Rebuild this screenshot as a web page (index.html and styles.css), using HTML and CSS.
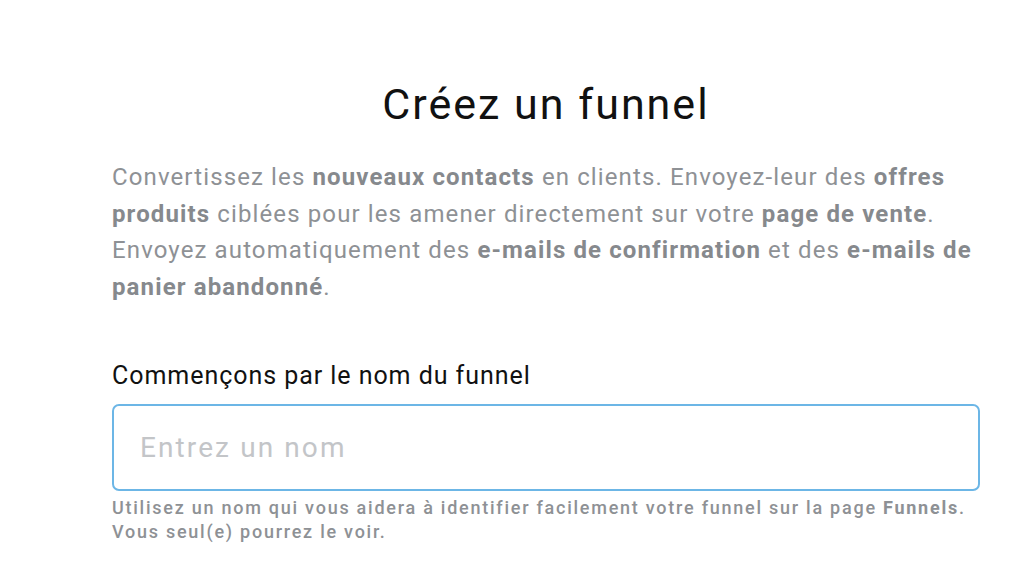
FILE: index.html
```html
<!DOCTYPE html>
<html lang="fr">
<head>
<meta charset="utf-8">
<link rel="stylesheet" href="styles.css">
</head>
<body>
<main class="page">
  <h1 class="title">Créez un funnel</h1>
  <p class="intro">Convertissez les <b>nouveaux contacts</b> en clients. Envoyez-leur des <b>offres produits</b> ciblées pour les amener directement sur votre <b>page de vente</b>. Envoyez automatiquement des <b>e-mails de confirmation</b> et des <b>e-mails de panier abandonné</b>.</p>
  <label class="field-label" for="name">Commençons par le nom du funnel</label>
  <input class="field-input" id="name" type="text" placeholder="Entrez un nom">
  <p class="help">Utilisez un nom qui vous aidera à identifier facilement votre funnel sur la page <b>Funnels</b>.<br>Vous seul(e) pourrez le voir.</p>
</main>
</body>
</html>
```
FILE: styles.css
```css
html, body {
  margin: 0;
  padding: 0;
  background: #ffffff;
}
body {
  font-family: Roboto, "Noto Sans", sans-serif;
}
.page {
  width: 868px;
  margin: 0 0 0 112px;
  padding-top: 75px;
  display: flex;
  flex-direction: column;
}
.title {
  margin: 0;
  text-align: center;
  font-size: 43px;
  font-weight: 400;
  letter-spacing: 2px;
  line-height: 58px;
  color: #111111;
}
.intro {
  margin: 26px 0 0;
  font-size: 24px;
  letter-spacing: 1.12px;
  line-height: 36.7px;
  color: #8e9195;
}
.intro b {
  font-weight: 700;
  color: #86898d;
}
.field-label {
  margin-top: 54px;
  font-size: 25px;
  letter-spacing: 0.95px;
  line-height: 32px;
  color: #111111;
}
.field-input {
  margin-top: 12px;
  box-sizing: border-box;
  height: 87px;
  width: 100%;
  border: 2px solid #6cb6e6;
  border-radius: 7px;
  padding: 0 26px;
  font-family: inherit;
  font-size: 28px;
  letter-spacing: 2.1px;
  color: #222;
  outline: none;
}
.field-input::placeholder {
  color: #c3c5c8;
}
.help {
  margin: 5px 0 0;
  font-size: 18px;
  line-height: 24px;
  font-weight: 500;
  letter-spacing: 1.75px;
  color: #8e9195;
}
.help b {
  font-weight: 700;
}
```
